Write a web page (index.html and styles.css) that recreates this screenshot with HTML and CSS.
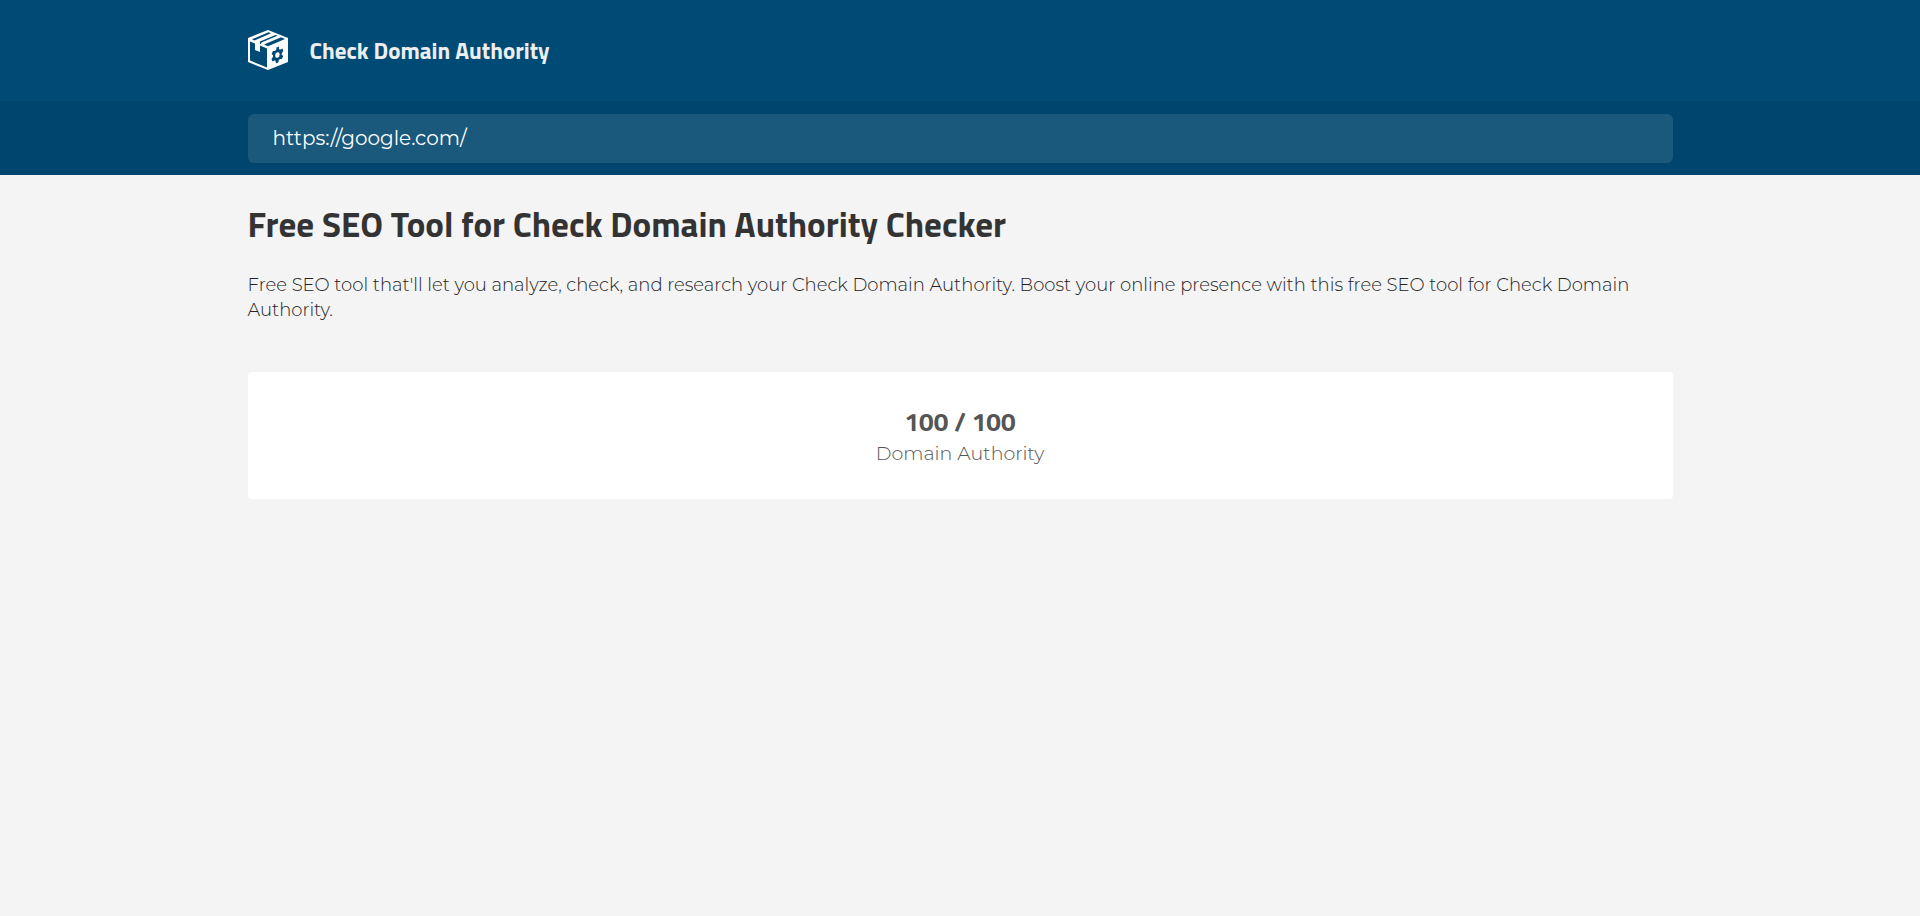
FILE: index.html
```
<!DOCTYPE html>
<html lang="en">

<head>
  <meta charset="UTF-8">
  <meta name="viewport" content="width=device-width, initial-scale=1.0" />
  <title>Check Domain Authority</title>
  <link rel="stylesheet" href="styles.css">
</head>

<body>
  <header class="header">
    <div class="container">
      <a class="brand" href="/">
        <svg class="brand-logo" viewBox="0 0 40 40" aria-hidden="true">
          <path fill="#fff" d="M20 0 40 8V32L20 40 0 32V8Z" />
          <path fill="#004b76" d="M2 11.500 7 13.500V20L12 22V15.500L19 18.500V37.500L2 30.500Z" />
          <path fill="#004b76" d="M4 9.300 20.500 2.300 23 3.300 6.500 10.400ZM12 11.500 27.500 5 29.500 5.800 14 12.300 12 14.500ZM16 14.500 33 7.300 37 9 20 16.200Z" />
          <path fill="#004b76" fill-rule="evenodd" d="M28.500 17.500 31 16.600V19.200L32.600 19.600 34.400 18.400 35.300 21 33.700 23.200V24.800L35.300 26 33.900 29 32 28.900 30.700 30.200 30.300 32.500 28 33.200 27.500 30.800 26 30.400 24.400 31.500 23.500 29 25 26.700V25.200L23.600 23.900 25 20.900 26.900 21 28.200 19.700ZM29.400 22.300A2.100 2.800 18 1 0 29.400 27.700 2.100 2.800 18 1 0 29.400 22.300Z" />
        </svg>
        <span class="brand-name">Check Domain Authority</span>
      </a>
    </div>
  </header>

  <form class="search-bar">
    <div class="container">
      <input class="search-input" type="text" name="url" value="https://google.com/" aria-label="Website URL">
    </div>
  </form>

  <main class="container">
    <h1 class="title">Free SEO Tool for Check Domain Authority Checker</h1>
    <p class="description">Free SEO tool that'll let you analyze, check, and research your Check Domain Authority. Boost your online presence with this free SEO tool for Check Domain Authority.</p>

    <section class="card">
      <div class="score">100 / 100</div>
      <div class="score-label">Domain Authority</div>
    </section>
  </main>
</body>

</html>
```
FILE: styles.css
```
* {
  box-sizing: border-box;
  margin: 0;
  padding: 0;
}

body {
  font-family: Montserrat, Inter, sans-serif;
  font-weight: 300;
  background: #f4f4f4;
  color: #333;
}

.container {
  width: 100%;
  max-width: 1465px;
  margin: 0 auto;
  padding: 0 20px;
}

.header {
  background: #004b76;
  padding: 30px 0 31px;
}

.brand {
  display: inline-flex;
  align-items: center;
  gap: 22px;
  vertical-align: top;
  color: #eee;
  text-decoration: none;
}

.brand-logo {
  width: 40px;
  height: 40px;
}

.brand-name {
  font-family: "Titillium Web", Roboto, sans-serif;
  font-size: 23px;
  font-weight: 700;
}

.search-bar {
  background: #00456d;
  padding: 13px 0 12px;
}

.search-input {
  display: block;
  width: 100%;
  height: 49px;
  padding: 0 25px 2px;
  border: none;
  border-radius: 6px;
  outline: none;
  background: #1a587c;
  color: #fff;
  font-family: inherit;
  font-size: 20px;
  font-weight: 400;
}

.title {
  margin-top: 24px;
  font-family: "Titillium Web", Roboto, sans-serif;
  font-size: 35px;
  font-weight: 700;
  line-height: 50px;
}

.description {
  margin-top: 24px;
  color: #222;
  font-size: 18px;
  line-height: 25px;
}

.card {
  margin-top: 49px;
  padding: 32px 20px;
  border-radius: 4px;
  background: #fff;
  text-align: center;
}

.score {
  color: #555;
  font-family: "Titillium Web", "Noto Sans", sans-serif;
  font-size: 26px;
  font-weight: 700;
  line-height: 36px;
}

.score-label {
  color: #555;
  font-size: 19px;
  line-height: 27px;
}
```
